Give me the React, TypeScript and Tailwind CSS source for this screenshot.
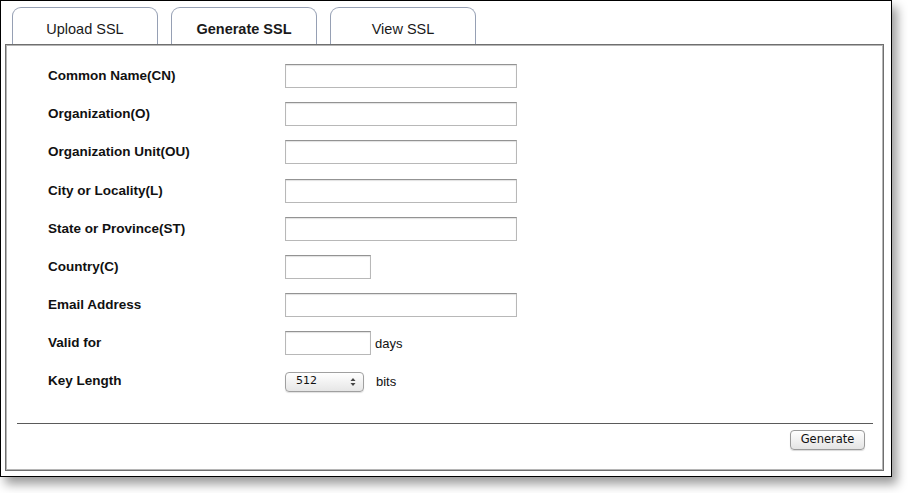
import React from "react";

const rows: { label: string; kind: "wide" | "short" | "days" | "select" }[] = [
  { label: "Common Name(CN)", kind: "wide" },
  { label: "Organization(O)", kind: "wide" },
  { label: "Organization Unit(OU)", kind: "wide" },
  { label: "City or Locality(L)", kind: "wide" },
  { label: "State or Province(ST)", kind: "wide" },
  { label: "Country(C)", kind: "short" },
  { label: "Email Address", kind: "wide" },
  { label: "Valid for", kind: "days" },
  { label: "Key Length", kind: "select" },
];

const inputCls =
  "h-[24px] bg-white border border-[#b8b8b8] border-t-[#939393] shadow-[inset_0_1px_1px_rgba(0,0,0,0.12)]";

function Tab({ label, active }: { label: string; active?: boolean }) {
  return (
    <div
      className={`w-[146px] h-[38px] bg-white border border-b-0 border-[#96a0b4] rounded-t-[9px] flex items-center justify-center pt-[6px] text-[14.5px] text-[#1a1a1a] ${
        active ? "font-bold" : ""
      }`}
      style={{ fontFamily: '"Liberation Sans", Arial, sans-serif' }}
    >
      {label}
    </div>
  );
}

export default function App() {
  return (
    <div className="w-[908px] h-[493px] bg-white relative overflow-hidden">
      <div
        className="w-[892px] h-[477px] bg-white border border-black shadow-[5px_7px_10px_rgba(0,0,0,0.4)] pl-[4px] flex flex-col"
        style={{ fontFamily: '"Liberation Sans", Arial, sans-serif' }}
      >
        <div className="flex gap-[13px] pl-[7px] pt-[6px] relative z-0">
          <Tab label="Upload SSL" />
          <Tab label="Generate SSL" active />
          <Tab label="View SSL" />
        </div>
        <div className="w-[879px] h-[427px] -mt-px relative z-10 border border-[#6f6f6f] shadow-[inset_1px_1px_0_#b5b5b5,inset_-1px_-1px_0_#b5b5b5] bg-white flex flex-col">
          <div className="pt-[12px] pl-[42px] flex flex-col">
            {rows.map((r) => (
              <div key={r.label} className="h-[38.2px] flex items-center">
                <div className="w-[237px] text-[13.5px] font-bold text-[#111]">{r.label}</div>
                {r.kind === "wide" && <div className={`${inputCls} w-[232px]`} />}
                {r.kind === "short" && <div className={`${inputCls} w-[86px]`} />}
                {r.kind === "days" && (
                  <div className="flex items-center">
                    <div className={`${inputCls} w-[86px]`} />
                    <span className="ml-[4px] text-[13px] text-[#111]">days</span>
                  </div>
                )}
                {r.kind === "select" && (
                  <div className="flex items-center">
                    <div
                      className="w-[79px] h-[20px] rounded-[4px] border border-[#a0a0a0] bg-gradient-to-b from-white to-[#e6e6e6] shadow-[0_1px_1px_rgba(0,0,0,0.12)] flex items-center justify-between pl-[10px] pr-[7px]"
                      style={{ fontFamily: '"DejaVu Sans", sans-serif' }}
                    >
                      <span className="text-[11px] text-[#111]">512</span>
                      <svg width="6" height="10" viewBox="0 0 6 10">
                        <path d="M3 1 L5.5 4 H0.5 Z" fill="#444" />
                        <path d="M3 9 L5.5 6 H0.5 Z" fill="#444" />
                      </svg>
                    </div>
                    <span className="ml-[12px] text-[13px] text-[#111]">bits</span>
                  </div>
                )}
              </div>
            ))}
          </div>
          <div className="mt-[22px] ml-[11px] mr-[10px] h-px bg-[#5a5a5a]" />
          <div className="flex justify-end pr-[18px] pt-[6px]">
            <div
              className="w-[75px] h-[20px] rounded-[4px] border border-[#9a9a9a] bg-gradient-to-b from-white to-[#e4e4e4] shadow-[0_1px_1px_rgba(0,0,0,0.15)] flex items-center justify-center text-[11.5px] text-[#111]"
              style={{ fontFamily: '"DejaVu Sans", sans-serif' }}
            >
              Generate
            </div>
          </div>
        </div>
      </div>
    </div>
  );
}
